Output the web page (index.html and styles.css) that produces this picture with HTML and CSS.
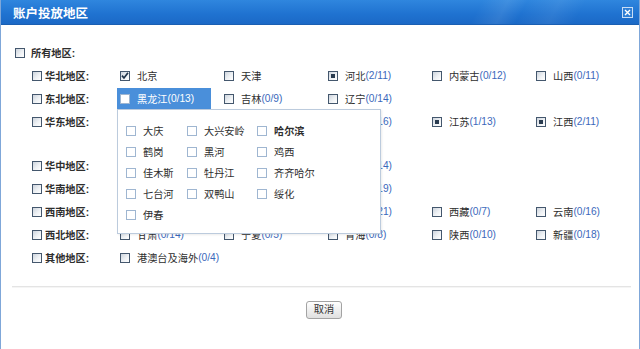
FILE: index.html
```html
<!DOCTYPE html>
<html lang="zh-CN">
<head>
<meta charset="utf-8">
<title>账户投放地区</title>
<link rel="stylesheet" href="styles.css">
</head>
<body>
<div class="dialog">
  <div class="titlebar">
    <span class="title">账户投放地区</span>
    <span class="close"><svg width="11" height="11" viewBox="0 0 11 11"><rect x="0.5" y="0.5" width="10" height="10" fill="#2f7fd6" stroke="#c9ddf5"/><path d="M3 3 L8 8 M8 3 L3 8" stroke="#ffffff" stroke-width="1.4"/></svg></span>
  </div>
  <div class="body">
    <div class="all"><span class="cb"></span><b>所有地区:</b></div>

    <div class="region">
      <div class="rlabel"><span class="cb"></span><b>华北地区:</b></div>
      <div class="items">
        <div class="item"><span class="cb checked"><svg width="8" height="8" viewBox="0 0 8 8"><path d="M1 3.6 L3 6 L7 0.8" fill="none" stroke="#1f3349" stroke-width="1.7"/></svg></span>北京</div>
        <div class="item"><span class="cb"></span>天津</div>
        <div class="item"><span class="cb part"></span>河北<span class="cnt">(2/11)</span></div>
        <div class="item"><span class="cb"></span>内蒙古<span class="cnt">(0/12)</span></div>
        <div class="item"><span class="cb"></span>山西<span class="cnt">(0/11)</span></div>
      </div>
    </div>

    <div class="region">
      <div class="rlabel"><span class="cb"></span><b>东北地区:</b></div>
      <div class="items">
        <div class="item active"><span class="cb"></span>黑龙江<span class="cnt">(0/13)</span>
          <div class="popup">
            <div class="pitem"><span class="cb"></span>大庆</div>
            <div class="pitem"><span class="cb"></span>大兴安岭</div>
            <div class="pitem"><span class="cb"></span><b>哈尔滨</b></div>
            <div class="pitem"><span class="cb"></span>鹤岗</div>
            <div class="pitem"><span class="cb"></span>黑河</div>
            <div class="pitem"><span class="cb"></span>鸡西</div>
            <div class="pitem"><span class="cb"></span>佳木斯</div>
            <div class="pitem"><span class="cb"></span>牡丹江</div>
            <div class="pitem"><span class="cb"></span>齐齐哈尔</div>
            <div class="pitem"><span class="cb"></span>七台河</div>
            <div class="pitem"><span class="cb"></span>双鸭山</div>
            <div class="pitem"><span class="cb"></span>绥化</div>
            <div class="pitem"><span class="cb"></span>伊春</div>
          </div>
        </div>
        <div class="item"><span class="cb"></span>吉林<span class="cnt">(0/9)</span></div>
        <div class="item"><span class="cb"></span>辽宁<span class="cnt">(0/14)</span></div>
      </div>
    </div>

    <div class="region">
      <div class="rlabel"><span class="cb"></span><b>华东地区:</b></div>
      <div class="items">
        <div class="item"><span class="cb"></span>上海<span class="cnt">(0/1)</span></div>
        <div class="item"><span class="cb"></span>浙江<span class="cnt">(0/11)</span></div>
        <div class="item"><span class="cb"></span>安徽<span class="cnt">(0/16)</span></div>
        <div class="item"><span class="cb part"></span>江苏<span class="cnt">(1/13)</span></div>
        <div class="item"><span class="cb part"></span>江西<span class="cnt">(2/11)</span></div>
        <div class="item"><span class="cb"></span>福建<span class="cnt">(0/9)</span></div>
        <div class="item"><span class="cb"></span>山东<span class="cnt">(0/17)</span></div>
      </div>
    </div>

    <div class="region">
      <div class="rlabel"><span class="cb"></span><b>华中地区:</b></div>
      <div class="items">
        <div class="item"><span class="cb"></span>河南<span class="cnt">(0/17)</span></div>
        <div class="item"><span class="cb"></span>湖北<span class="cnt">(0/13)</span></div>
        <div class="item"><span class="cb"></span>湖南<span class="cnt">(0/14)</span></div>
      </div>
    </div>

    <div class="region">
      <div class="rlabel"><span class="cb"></span><b>华南地区:</b></div>
      <div class="items">
        <div class="item"><span class="cb"></span>广东<span class="cnt">(0/21)</span></div>
        <div class="item"><span class="cb"></span>广西<span class="cnt">(0/14)</span></div>
        <div class="item"><span class="cb"></span>海南<span class="cnt">(0/19)</span></div>
      </div>
    </div>

    <div class="region">
      <div class="rlabel"><span class="cb"></span><b>西南地区:</b></div>
      <div class="items">
        <div class="item"><span class="cb"></span>重庆<span class="cnt">(0/1)</span></div>
        <div class="item"><span class="cb"></span>贵州<span class="cnt">(0/9)</span></div>
        <div class="item"><span class="cb"></span>四川<span class="cnt">(0/21)</span></div>
        <div class="item"><span class="cb"></span>西藏<span class="cnt">(0/7)</span></div>
        <div class="item"><span class="cb"></span>云南<span class="cnt">(0/16)</span></div>
      </div>
    </div>

    <div class="region">
      <div class="rlabel"><span class="cb"></span><b>西北地区:</b></div>
      <div class="items">
        <div class="item"><span class="cb"></span>甘肃<span class="cnt">(0/14)</span></div>
        <div class="item"><span class="cb"></span>宁夏<span class="cnt">(0/5)</span></div>
        <div class="item"><span class="cb"></span>青海<span class="cnt">(0/8)</span></div>
        <div class="item"><span class="cb"></span>陕西<span class="cnt">(0/10)</span></div>
        <div class="item"><span class="cb"></span>新疆<span class="cnt">(0/18)</span></div>
      </div>
    </div>

    <div class="region">
      <div class="rlabel"><span class="cb"></span><b>其他地区:</b></div>
      <div class="items">
        <div class="item wide"><span class="cb"></span>港澳台及海外<span class="cnt">(0/4)</span></div>
      </div>
    </div>
  </div>
  <div class="divider"></div>
  <div class="footer"><button class="btn">取消</button></div>
</div>
</body>
</html>
```

FILE: styles.css
```css
* { box-sizing: border-box; }
html, body { margin: 0; padding: 0; background: #fff; }
body {
  font-family: "Liberation Sans", "Noto Sans CJK SC", sans-serif;
  font-size: 10.2px;
  color: #2e2e2e;
}
.dialog {
  width: 640px;
  height: 349px;
  border-left: 1px solid #7fa7d9;
  border-right: 1px solid #7fa7d9;
  overflow: hidden;
}
.titlebar {
  height: 25px;
  display: flex;
  align-items: center;
  justify-content: space-between;
  padding: 0 6px 0 12px;
  background:
    linear-gradient(118deg, rgba(255,255,255,0) 74%, rgba(255,255,255,0.09) 78%, rgba(255,255,255,0) 81%, rgba(255,255,255,0.07) 86%, rgba(255,255,255,0) 90%),
    linear-gradient(#2f86de, #1f72d0 60%, #1b69c6);
  border-bottom: 1px solid #1a5fb2;
}
.title {
  color: #fff;
  font-weight: bold;
  font-size: 12.5px;
}
.close { display: flex; margin-top: 1px; }
.body { padding: 17px 0 0 14px; }
.all, .rlabel, .item, .pitem {
  display: flex;
  align-items: center;
  height: 21px;
  white-space: nowrap;
}
.all .cb { margin-right: 6px; }
.all { margin-bottom: 2px; }
.region {
  display: flex;
  padding-left: 17px;
  margin-bottom: 2px;
}
.rlabel { width: 88px; flex: none; align-self: flex-start; }
.rlabel .cb { margin-right: 3px; }
.items {
  display: grid;
  grid-template-columns: repeat(5, 104px);
  grid-auto-rows: 21px;
}
.item .cb, .pitem .cb { margin-right: 7px; }
.item.wide { grid-column: span 2; }
.cnt { color: #3b68bb; }
.cb {
  width: 10px;
  height: 10px;
  flex: none;
  border: 1px solid #44576d;
  background: linear-gradient(135deg, #cdd4dd 0%, #eef1f4 55%, #ffffff 100%);
  display: inline-flex;
  align-items: center;
  justify-content: center;
}
.cb.part::after {
  content: "";
  width: 4px;
  height: 4px;
  background: #2a3c50;
}
.item.active {
  position: relative;
  margin-left: -3px;
  padding-left: 3px;
  width: 94px;
  background: #4a8fda;
  color: #fff;
}
.item.active .cnt { color: #fff; }
.item.active .cb {
  background: #fff;
  border-color: #9fb6d1;
}
.popup {
  position: absolute;
  top: 21px;
  left: 0;
  z-index: 10;
  width: 264px;
  height: 125px;
  padding: 10px 0 0 8px;
  background: #fff;
  border: 1px solid #bccbdd;
  box-shadow: 1px 1px 2px rgba(0,0,0,0.08);
  display: grid;
  grid-template-columns: 61px 70px auto;
  grid-auto-rows: 21px;
  align-content: start;
  color: #2e2e2e;
}
.pitem .cb { border-color: #75869a; }
.divider {
  margin: 18px 8px 0 11px;
  height: 2px;
  border-top: 1px solid #e4e4e4;
  background: #f5f5f5;
}
.footer {
  display: flex;
  justify-content: center;
  padding: 13px 0 0 8px;
}
.btn {
  width: 36px;
  height: 18px;
  padding: 0;
  font-family: "Liberation Sans", "Noto Sans CJK SC", sans-serif;
  font-size: 10.2px;
  color: #333;
  border: 1px solid #a3a3a3;
  border-radius: 3px;
  background: linear-gradient(#ffffff, #ececec 60%, #e0e0e0);
  line-height: 16px;
}
```
